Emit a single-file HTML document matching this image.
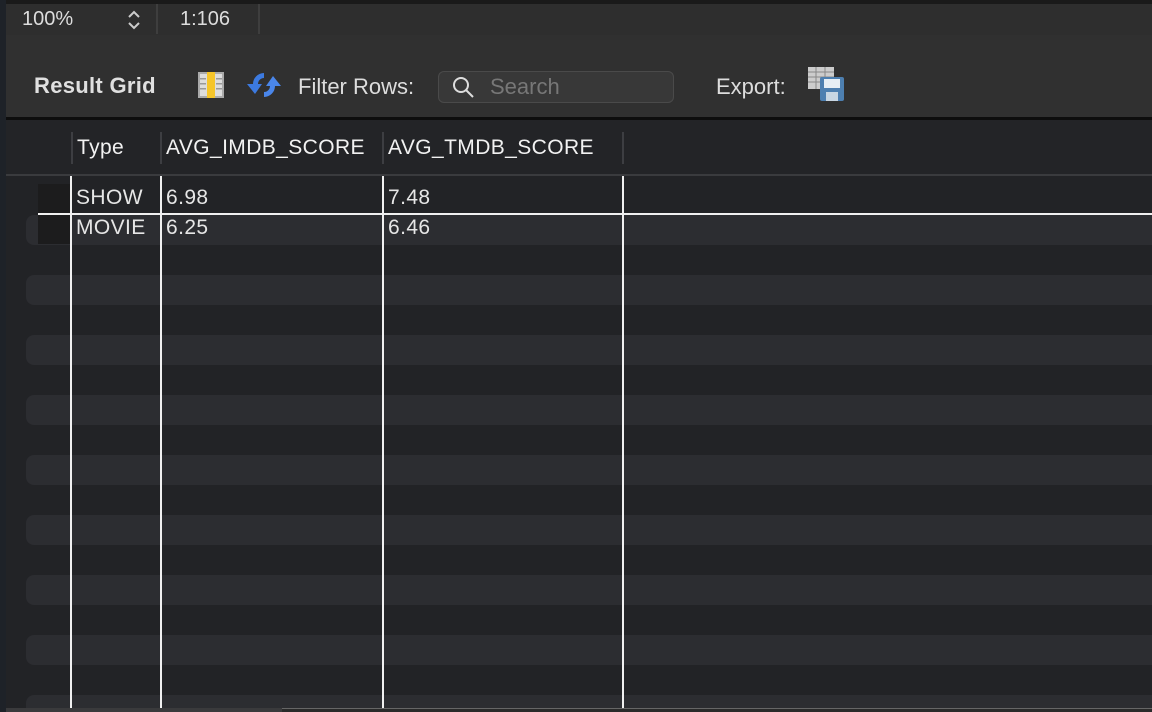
<!DOCTYPE html>
<html><head><style>
*{margin:0;padding:0;box-sizing:border-box}
html,body{width:1152px;height:712px;overflow:hidden}
body{background:#222326;font-family:"Liberation Sans",sans-serif;position:relative;color:#e6e6e6}
.a{position:absolute}
.t{font-size:21px;letter-spacing:0.4px}
</style></head><body>
<div class="a" style="left:0;top:0;width:1152px;height:4px;background:#1a1a1a"></div>
<div class="a" style="left:6px;top:4px;width:1146px;height:114px;background:#2e2e2e"></div>
<div class="a" style="left:6px;top:35px;width:1146px;height:83px;background:#303030"></div>
<div class="a" style="left:0;top:0;width:6px;height:712px;background:#1e2228"></div>
<div class="a" style="left:22px;top:8px;font-size:20px;color:#ddd">100%</div>
<svg class="a" style="left:126px;top:8px" width="16" height="24"><path d="M3 9 L8 4 L13 9 M3 15 L8 20 L13 15" stroke="#ccc" stroke-width="2" fill="none"/></svg>
<div class="a" style="left:156px;top:4px;width:2px;height:30px;background:#3e3e3e"></div>
<div class="a" style="left:180px;top:8px;font-size:20px;color:#ddd">1:106</div>
<div class="a" style="left:258px;top:4px;width:2px;height:30px;background:#3e3e3e"></div>
<div class="a" style="left:34px;top:73px;font-size:22px;font-weight:bold;color:#e0e0e0;letter-spacing:0.3px">Result Grid</div>
<svg class="a" style="left:198px;top:71px" width="26" height="28"><rect x="0" y="1" width="26" height="26" fill="#aaa"/><rect x="2" y="3" width="22" height="22" fill="#ddd"/><rect x="9" y="1" width="8" height="26" fill="#f5c52a"/><g fill="#999"><rect x="2" y="7" width="6" height="1.5"/><rect x="2" y="12" width="6" height="1.5"/><rect x="2" y="17" width="6" height="1.5"/><rect x="18" y="7" width="6" height="1.5"/><rect x="18" y="12" width="6" height="1.5"/><rect x="18" y="17" width="6" height="1.5"/></g></svg>
<svg class="a" style="left:247px;top:70px" width="34" height="30"><path d="M17 3 A11 11 0 0 0 6 14 L0 14 L8 24 L15 14 L11 14 A6 6 0 0 1 17 8Z" fill="#3c7ae0"/><path d="M17 27 A11 11 0 0 0 28 16 L34 16 L26 6 L19 16 L23 16 A6 6 0 0 1 17 22Z" fill="#4a86ea"/></svg>
<div class="a" style="left:298px;top:74px;font-size:22px;color:#ddd">Filter Rows:</div>
<div class="a" style="left:438px;top:71px;width:236px;height:32px;border:1px solid #4a4a4a;border-radius:6px;background:#383838"></div>
<svg class="a" style="left:452px;top:76px" width="24" height="24"><circle cx="9" cy="9" r="7" stroke="#ddd" stroke-width="2" fill="none"/><path d="M14 14 L21 21" stroke="#ddd" stroke-width="2"/></svg>
<div class="a" style="left:490px;top:74px;font-size:22px;color:#777">Search</div>
<div class="a" style="left:716px;top:74px;font-size:22px;color:#ddd">Export:</div>
<svg class="a" style="left:808px;top:67px" width="38" height="36"><rect x="0" y="0" width="26" height="22" fill="#ccc"/><g stroke="#888" stroke-width="1"><path d="M0 5H26M0 10H26M0 15H26M8 0V22M17 0V22"/></g><rect x="12" y="10" width="24" height="24" rx="2" fill="#4d7fb0"/><rect x="16" y="12" width="16" height="9" fill="#e6eef5"/><rect x="18" y="25" width="12" height="9" fill="#c8d6e3"/></svg>
<div class="a" style="left:6px;top:117px;width:1146px;height:3px;background:#0d0d0d"></div>
<div class="a" style="left:6px;top:120px;width:1146px;height:54px;background:#232427"></div>
<div class="a" style="left:6px;top:174px;width:1146px;height:2px;background:#3a3b3e"></div>
<div class="a" style="left:71px;top:132px;width:2px;height:32px;background:#3d3e42"></div>
<div class="a" style="left:160px;top:132px;width:2px;height:32px;background:#3d3e42"></div>
<div class="a" style="left:382px;top:132px;width:2px;height:32px;background:#3d3e42"></div>
<div class="a" style="left:622px;top:132px;width:2px;height:32px;background:#3d3e42"></div>
<div class="a t" style="left:77px;top:136px;color:#f2f2f2">Type</div>
<div class="a t" style="left:166px;top:136px;color:#f2f2f2">AVG_IMDB_SCORE</div>
<div class="a t" style="left:388px;top:136px;color:#f2f2f2">AVG_TMDB_SCORE</div>
<div class="a" style="left:26px;top:215px;width:1126px;height:30px;background:#2c2d31;border-radius:8px 0 0 8px"></div>
<div class="a" style="left:26px;top:275px;width:1126px;height:30px;background:#2c2d31;border-radius:8px 0 0 8px"></div>
<div class="a" style="left:26px;top:335px;width:1126px;height:30px;background:#2c2d31;border-radius:8px 0 0 8px"></div>
<div class="a" style="left:26px;top:395px;width:1126px;height:30px;background:#2c2d31;border-radius:8px 0 0 8px"></div>
<div class="a" style="left:26px;top:455px;width:1126px;height:30px;background:#2c2d31;border-radius:8px 0 0 8px"></div>
<div class="a" style="left:26px;top:515px;width:1126px;height:30px;background:#2c2d31;border-radius:8px 0 0 8px"></div>
<div class="a" style="left:26px;top:575px;width:1126px;height:30px;background:#2c2d31;border-radius:8px 0 0 8px"></div>
<div class="a" style="left:26px;top:635px;width:1126px;height:30px;background:#2c2d31;border-radius:8px 0 0 8px"></div>
<div class="a" style="left:26px;top:695px;width:1126px;height:13px;background:#2c2d31;border-radius:8px 0 0 0"></div>
<div class="a" style="left:38px;top:184px;width:32px;height:60px;background:#1c1c1d"></div>
<div class="a" style="left:38px;top:213px;width:1114px;height:2px;background:#f0f0f0"></div>
<div class="a" style="left:70px;top:176px;width:2px;height:532px;background:#f0f0f0"></div>
<div class="a" style="left:160px;top:176px;width:2px;height:532px;background:#f0f0f0"></div>
<div class="a" style="left:382px;top:176px;width:2px;height:532px;background:#f0f0f0"></div>
<div class="a" style="left:622px;top:176px;width:2px;height:532px;background:#f0f0f0"></div>
<div class="a t" style="left:76px;top:186px">SHOW</div>
<div class="a t" style="left:166px;top:186px">6.98</div>
<div class="a t" style="left:388px;top:186px">7.48</div>
<div class="a t" style="left:76px;top:216px">MOVIE</div>
<div class="a t" style="left:166px;top:216px">6.25</div>
<div class="a t" style="left:388px;top:216px">6.46</div>
<div class="a" style="left:6px;top:708px;width:276px;height:4px;background:#3a3a3c"></div>
<div class="a" style="left:282px;top:708px;width:870px;height:4px;background:#2a2a2a;border-top:1px solid #666"></div>
</body></html>
